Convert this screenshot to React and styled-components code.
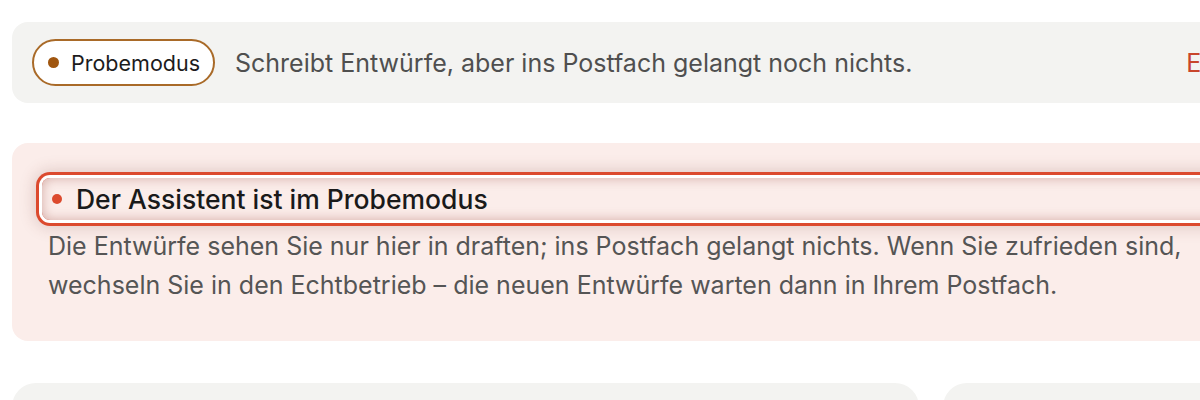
import React from 'react';
import styled, { createGlobalStyle } from 'styled-components';

const GlobalStyle = createGlobalStyle`
  html, body {
    margin: 0;
    padding: 0;
    overflow: hidden;
    background: #fff;
  }
  body {
    font-family: Inter, "Noto Sans", sans-serif;
    color: #1c1c1c;
  }
`;

const Page = styled.div`
  width: 1420px;
  padding: 22px 12px;
  display: flex;
  flex-direction: column;
  gap: 40px;
`;

const ModeBar = styled.div`
  display: flex;
  align-items: center;
  gap: 20px;
  padding: 17px 20px;
  background: #f3f3f1;
  border-radius: 16px;
`;

const Badge = styled.span`
  display: inline-flex;
  align-items: center;
  gap: 12px;
  height: 43px;
  padding: 0 13px 0 14px;
  border: 2px solid #a96a28;
  border-radius: 999px;
  background: #fff;
  font-size: 21.5px;
  color: #1c1c1c;
`;

const Dot = styled.span`
  width: ${(p) => p.size || 10}px;
  height: ${(p) => p.size || 10}px;
  border-radius: 50%;
  background: ${(p) => p.color};
  flex: none;
`;

const BarText = styled.span`
  font-size: 25px;
  color: #4f4f4f;
`;

const BarLink = styled.a`
  margin-left: auto;
  font-size: 25px;
  color: #c8452b;
  text-decoration: none;
`;

const Notice = styled.section`
  background: #fbedea;
  border-radius: 16px;
  padding: 35px 36px 36px;
`;

const NoticeTitle = styled.h2`
  display: flex;
  align-items: center;
  gap: 14px;
  margin: 0 0 7px -6px;
  padding: 5px 10px;
  font-size: 26.5px;
  font-weight: 500;
  color: #1a1a1a;
  border-radius: 8px;
  box-shadow: inset 0 0 12px rgba(150, 60, 50, 0.38), 0 0 0 3px #fff,
    0 0 0 6px #dc4a2e, 0 0 16px 7px rgba(120, 60, 50, 0.22);
`;

const NoticeText = styled.p`
  max-width: 1150px;
  margin: 0;
  font-size: 25px;
  line-height: 39px;
  color: #555;
`;

const Grid = styled.div`
  display: grid;
  grid-template-columns: 13fr 7fr;
  gap: 24px;
  margin-top: 2px;
`;

const Panel = styled.div`
  height: 120px;
  background: #f3f3f1;
  border-radius: 24px;
`;

export default function App() {
  return (
    <>
      <GlobalStyle />
      <Page>
        <ModeBar>
          <Badge>
            <Dot color="#a0560f" size={11} />
            Probemodus
          </Badge>
          <BarText>Schreibt Entwürfe, aber ins Postfach gelangt noch nichts.</BarText>
          <BarLink href="#">Echtbetrieb starten</BarLink>
        </ModeBar>

        <Notice>
          <NoticeTitle tabIndex={-1}>
            <Dot color="#dc4a2e" size={10} />
            Der Assistent ist im Probemodus
          </NoticeTitle>
          <NoticeText>
            Die Entwürfe sehen Sie nur hier in draften; ins Postfach gelangt nichts. Wenn Sie zufrieden sind,
            wechseln Sie in den Echtbetrieb – die neuen Entwürfe warten dann in Ihrem Postfach.
          </NoticeText>
        </Notice>

        <Grid>
          <Panel />
          <Panel />
        </Grid>
      </Page>
    </>
  );
}
